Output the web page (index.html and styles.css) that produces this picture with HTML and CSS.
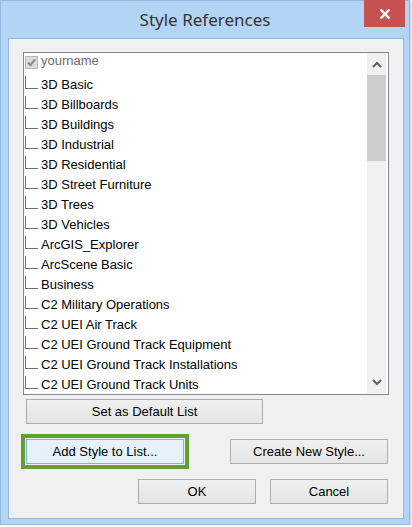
FILE: index.html
```html
<!DOCTYPE html>
<html lang="en">
<head>
    <meta charset="UTF-8">
    <meta name="viewport" content="width=device-width, initial-scale=1.0">
    <title>Style References</title>
    <link rel="stylesheet" href="styles.css">
</head>
<body>
    <div class="window">
        <div class="titlebar">
            <span class="title">Style References</span>
            <div class="close-btn">
                <svg width="12" height="10" viewBox="0 0 12 10">
                    <path d="M1.5 0.5 L10.5 9.5 M10.5 0.5 L1.5 9.5" stroke="#fff" stroke-width="2.4" fill="none"/>
                </svg>
            </div>
        </div>
        <div class="client">
            <div class="listbox">
                <div class="items">
                    <div class="item item-first">
                        <span class="check check-on">
                            <svg width="11" height="11" viewBox="0 0 11 11">
                                <path d="M2 5.5 L4.5 8 L9 2.5" stroke="#8a8a8a" stroke-width="2" fill="none"/>
                            </svg>
                        </span>
                        <span class="label label-muted">yourname</span>
                    </div>
                    <div class="item"><span class="check"></span><span class="label">3D Basic</span></div>
                    <div class="item"><span class="check"></span><span class="label">3D Billboards</span></div>
                    <div class="item"><span class="check"></span><span class="label">3D Buildings</span></div>
                    <div class="item"><span class="check"></span><span class="label">3D Industrial</span></div>
                    <div class="item"><span class="check"></span><span class="label">3D Residential</span></div>
                    <div class="item"><span class="check"></span><span class="label">3D Street Furniture</span></div>
                    <div class="item"><span class="check"></span><span class="label">3D Trees</span></div>
                    <div class="item"><span class="check"></span><span class="label">3D Vehicles</span></div>
                    <div class="item"><span class="check"></span><span class="label">ArcGIS_Explorer</span></div>
                    <div class="item"><span class="check"></span><span class="label">ArcScene Basic</span></div>
                    <div class="item"><span class="check"></span><span class="label">Business</span></div>
                    <div class="item"><span class="check"></span><span class="label">C2 Military Operations</span></div>
                    <div class="item"><span class="check"></span><span class="label">C2 UEI Air Track</span></div>
                    <div class="item"><span class="check"></span><span class="label">C2 UEI Ground Track Equipment</span></div>
                    <div class="item"><span class="check"></span><span class="label">C2 UEI Ground Track Installations</span></div>
                    <div class="item"><span class="check"></span><span class="label">C2 UEI Ground Track Units</span></div>
                </div>
                <div class="scrollbar">
                    <div class="arrow">
                        <svg width="10" height="7" viewBox="0 0 10 7">
                            <path d="M1 6 L5 2 L9 6" stroke="#606060" stroke-width="2" fill="none"/>
                        </svg>
                    </div>
                    <div class="thumb"></div>
                    <div class="track"></div>
                    <div class="arrow">
                        <svg width="10" height="7" viewBox="0 0 10 7">
                            <path d="M1 1 L5 5 L9 1" stroke="#606060" stroke-width="2" fill="none"/>
                        </svg>
                    </div>
                </div>
            </div>

            <button class="btn btn-default">Set as Default List</button>

            <div class="action-row">
                <button class="btn btn-focus">Add Style to List...</button>
                <button class="btn">Create New Style...</button>
            </div>

            <div class="dialog-row">
                <button class="btn">OK</button>
                <button class="btn">Cancel</button>
            </div>
        </div>
    </div>
</body>
</html>
```

FILE: styles.css
```css
body {
    margin: 0;
    background: #ffffff;
    font-family: 'Liberation Sans', Arial, sans-serif;
}

.window {
    position: relative;
    width: 410px;
    height: 525px;
    box-sizing: border-box;
    background: #b2d5f6;
    border: 1px solid #94b9df;
    box-shadow: 1px 1px 2px rgba(120, 170, 220, 0.6);
}

.titlebar {
    height: 37px;
    display: flex;
    justify-content: center;
}

.title {
    font-family: 'Noto Sans', 'Open Sans', sans-serif;
    font-size: 17px;
    color: #333333;
    line-height: 20px;
    margin-top: 9px;
}

.close-btn {
    position: absolute;
    top: -1px;
    right: 4px;
    width: 41px;
    height: 27px;
    background: #c75050;
    display: flex;
    align-items: center;
    justify-content: center;
}

.client {
    height: 481px;
    margin: 0 5px 0 7px;
    box-sizing: border-box;
    background: #f0f0f0;
    border: 1px solid #93b6dc;
    padding: 13px 0 0 14px;
    display: flex;
    flex-direction: column;
    align-items: flex-start;
}

.listbox {
    width: 366px;
    height: 343px;
    box-sizing: border-box;
    border: 1px solid #828790;
    background: #ffffff;
    display: flex;
}

.items {
    flex: 1;
    padding-left: 1px;
    overflow: hidden;
}

.item {
    height: 20px;
    line-height: 20px;
    font-size: 13px;
    color: #000000;
    display: flex;
}

.item-first {
    height: 15px;
    line-height: 15px;
    margin-bottom: 7px;
}

.check {
    width: 13px;
    height: 13px;
    margin-top: 1px;
    box-sizing: border-box;
    border-left: 1px solid #707070;
    border-bottom: 1px solid #707070;
    flex-shrink: 0;
}

.check-on {
    margin-top: 3px;
    border: 1px solid #b8b8b8;
    background: #dcdcdc;
    display: flex;
    align-items: center;
    justify-content: center;
}

.label {
    margin-left: 3px;
    white-space: nowrap;
}

.label-muted {
    color: #6d6d6d;
}

.scrollbar {
    width: 19px;
    margin: 0 2px 1px 0;
    background: #f0f0f0;
    display: flex;
    flex-direction: column;
}

.arrow {
    height: 22px;
    display: flex;
    align-items: center;
    justify-content: center;
}

.thumb {
    height: 86px;
    background: #cdcdcd;
}

.track {
    flex: 1;
}

.btn {
    font-family: 'Liberation Sans', Arial, sans-serif;
    font-size: 13px;
    color: #000000;
    width: 158px;
    height: 25px;
    padding: 0;
    box-sizing: border-box;
    border: 1px solid #adadad;
    background: linear-gradient(#f0f0f0, #e5e5e5);
}

.btn-default {
    width: 237px;
    margin: 4px 0 0 3px;
}

.btn-focus {
    background: #e5f1fb;
    border-color: #7eb4ea;
    outline: 4px solid #62a12e;
    outline-offset: 1px;
}

.action-row {
    display: flex;
    justify-content: space-between;
    width: 362px;
    margin: 15px 0 0 3px;
}

.dialog-row {
    display: flex;
    gap: 14px;
    margin: 15px 0 0 115px;
}

.dialog-row .btn {
    width: 118px;
}
```
